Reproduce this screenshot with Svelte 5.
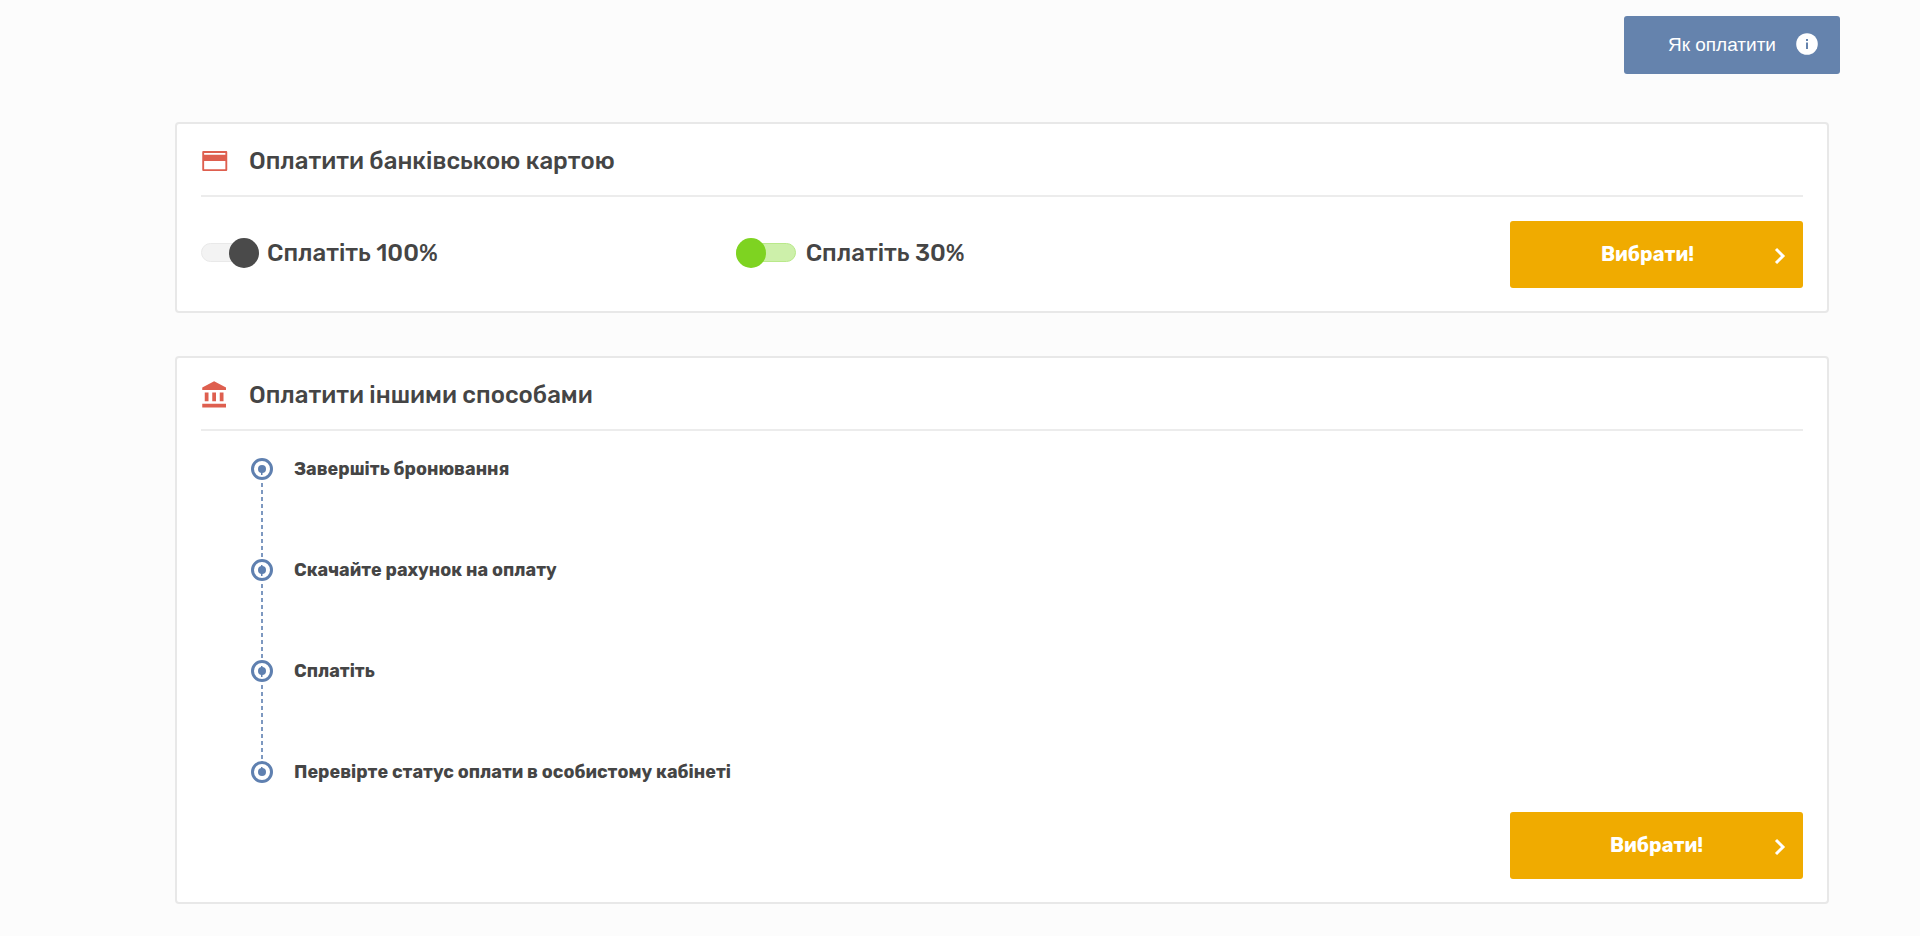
<script>
    let amount = '30';

    const options = [
        { value: '100', label: 'Сплатіть 100%' },
        { value: '30', label: 'Сплатіть 30%' }
    ];

    const steps = [
        'Завершіть бронювання',
        'Скачайте рахунок на оплату',
        'Сплатіть',
        'Перевірте статус оплати в особистому кабінеті'
    ];
</script>

<div class="page">
    <div class="top-bar">
        <button type="button" class="help-button">
            Як оплатити
            <svg class="info-icon" viewBox="0 0 22 22" aria-hidden="true">
                <circle cx="11" cy="10" r="10.800" fill="#fff" />
                <path d="M10 5h2v2h-2zM10 8.500h2V15h-2z" fill="#6583ad" />
            </svg>
        </button>
    </div>

    <main class="container">
        <section class="card">
            <header class="card-header">
                <svg class="card-icon" viewBox="1 0 24 24" aria-hidden="true">
                    <path d="M21 4H3c-.6 0-1 .4-1 1v14c0 .6.4 1 1 1h18c.6 0 1-.4 1-1V5c0-.6-.4-1-1-1zm-.500 14.500h-17V12h17v6.500zm0-11.500h-17V5.500h17V7z" />
                </svg>
                <h2>Оплатити банківською картою</h2>
            </header>
            <div class="options">
                {#each options as option}
                    <label class="option">
                        <input type="radio" name="amount" value={option.value} bind:group={amount} />
                        {option.label}
                    </label>
                {/each}
                <button type="button" class="select-button shifted">
                    <span>Вибрати!</span>
                    <svg class="chevron" viewBox="0 0 12 18" aria-hidden="true">
                        <path d="M2 3l7 7-7 7" />
                    </svg>
                </button>
            </div>
        </section>

        <section class="card">
            <header class="card-header">
                <svg class="card-icon" viewBox="1 0 24 24" aria-hidden="true">
                    <path d="M4 10v7h3v-7H4zm6 0v7h3v-7h-3zM2 22h19v-3H2v3zm14-12v7h3v-7h-3zm-4.500-9L2 6v2h19V6l-9.500-5z" />
                </svg>
                <h2>Оплатити іншими способами</h2>
            </header>
            <ol class="steps">
                {#each steps as step, i}
                    <li class="step">
                        <div class="track">
                            <svg class="marker" viewBox="0 0 22 22" aria-hidden="true">
                                <circle cx="11" cy="11" r="9.500" fill="#fff" stroke="#5f80b0" stroke-width="3" />
                                <circle cx="11" cy="11" r="4" fill="#5f80b0" />
                                {#if i > 0}
                                    <path d="M10 6h1.500v4H10z" fill="#5f80b0" />
                                {/if}
                                {#if i < steps.length - 1}
                                    <path d="M10 12h1.500v5H10z" fill="#5f80b0" />
                                {/if}
                            </svg>
                            {#if i < steps.length - 1}
                                <span class="connector"></span>
                            {/if}
                        </div>
                        <span class="step-title">{step}</span>
                    </li>
                {/each}
            </ol>
            <div class="actions">
                <button type="button" class="select-button">
                    <span>Вибрати!</span>
                    <svg class="chevron" viewBox="0 0 12 18" aria-hidden="true">
                        <path d="M2 3l7 7-7 7" />
                    </svg>
                </button>
            </div>
        </section>
    </main>
</div>

<style>
    :global(body) {
        background: #fcfcfc;
    }

    .page {
        padding: 16px 0 32px;
        color: #454545;
        font-family: Rubik, Roboto, sans-serif;
    }

    .page * {
        box-sizing: border-box;
    }

    .top-bar {
        display: flex;
        justify-content: flex-end;
        padding-right: 80px;
    }

    button {
        border: 0;
        border-radius: 3px;
        color: #fff;
        cursor: pointer;
    }

    .help-button {
        display: flex;
        align-items: center;
        justify-content: flex-end;
        gap: 20px;
        width: 216px;
        height: 58px;
        padding: 0 22px;
        background: #6583ad;
        font-family: "Liberation Sans", Arial, sans-serif;
        font-size: 19px;
        white-space: nowrap;
    }

    .info-icon {
        flex: none;
        width: 22px;
        height: 22px;
        overflow: visible;
    }

    .container {
        display: flex;
        flex-direction: column;
        gap: 43px;
        margin: 48px 91px 0 175px;
    }

    .card {
        padding: 0 24px 23px;
        background: #fff;
        border: 2px solid #e8e8e8;
        border-radius: 4px;
    }

    .card-header {
        display: flex;
        align-items: center;
        gap: 18px;
        height: 73px;
        padding-top: 3px;
        border-bottom: 2px solid #ececec;
    }

    .card-icon {
        width: 30px;
        height: 30px;
        fill: #de5f4f;
    }

    h2 {
        margin: 0;
        font-size: 24px;
        font-weight: 500;
        line-height: 30px;
    }

    .options {
        display: grid;
        grid-template-columns: repeat(3, 1fr);
        column-gap: 2px;
        align-items: center;
        padding-top: 24px;
    }

    .option {
        display: flex;
        align-items: center;
        gap: 8px;
        padding-bottom: 4px;
        font-size: 24px;
        font-weight: 500;
        line-height: 30px;
    }

    /* the knob sits left and turns green when the option is chosen */
    input {
        display: flex;
        align-items: center;
        justify-content: flex-end;
        appearance: none;
        width: 58px;
        height: 19px;
        margin: 0;
        background: #f3f3f3;
        border: 1px solid #e9e9e9;
        border-radius: 10px;
        cursor: pointer;
    }

    input::before {
        content: "";
        flex: none;
        width: 30px;
        height: 30px;
        margin: 0 -1px;
        background: #4a4a4a;
        border-radius: 50%;
    }

    input:checked {
        justify-content: flex-start;
        width: 60px;
        margin-right: 2px;
        background: #cdf0aa;
        border-color: #b9e98a;
    }

    input:checked::before {
        background: #7ed321;
    }

    .select-button {
        display: grid;
        grid-template-columns: 1fr auto 1fr;
        align-items: center;
        justify-self: end;
        width: 293px;
        height: 67px;
        padding: 0 17px;
        background: #f0ab00;
        font-family: inherit;
        font-size: 20px;
        font-weight: 700;
    }

    .select-button span {
        grid-column: 2;
        padding-bottom: 2px;
    }

    .shifted span {
        padding-right: 18px;
    }

    .chevron {
        justify-self: end;
        width: 12px;
        height: 18px;
        fill: none;
        stroke: #fff;
        stroke-width: 3;
    }

    .steps {
        margin: 0;
        padding: 27px 0 0 50px;
        list-style: none;
    }

    .step {
        display: flex;
        gap: 21px;
        height: 101px;
    }

    .step:last-child {
        height: 51px;
    }

    .track {
        display: flex;
        flex-direction: column;
    }

    .marker {
        flex: none;
        width: 22px;
        height: 22px;
    }

    .connector {
        flex: 1;
        width: 2px;
        margin-left: 10px;
        background: repeating-linear-gradient(#fff 0 3px, #7d98c0 3px 7px);
    }

    .step-title {
        font-size: 18px;
        font-weight: 700;
        line-height: 22px;
    }

    .actions {
        display: flex;
        justify-content: flex-end;
    }
</style>
